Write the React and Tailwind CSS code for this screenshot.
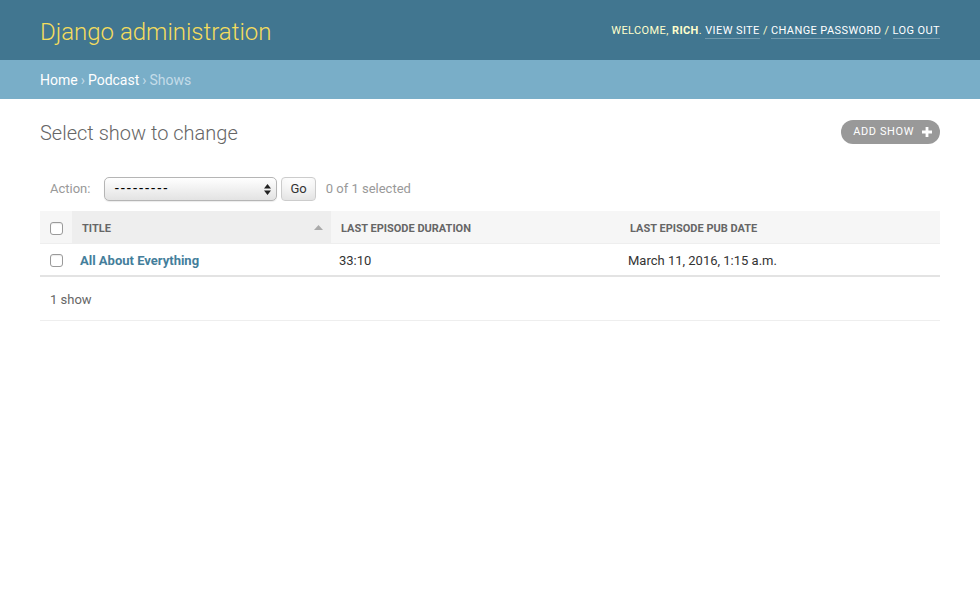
import React from 'react';

const Checkbox = () => (
  <span className="inline-block w-[13px] h-[13px] rounded-[3px] border border-[#9a9a9a] bg-white align-middle shadow-[inset_0_1px_1px_rgba(0,0,0,0.08)]"></span>
);

const App = () => {
  return (
    <div className="min-h-[600px] bg-white text-[#333] font-['Roboto','Liberation_Sans',sans-serif] text-[14px]">
      {/* Header */}
      <div className="h-[60px] bg-[#417690] px-10 flex items-center justify-between">
        <h1 className="mt-[3px] text-[24px] font-light text-[#f5dd5d] leading-none">Django administration</h1>
        <div className="text-[11px] uppercase tracking-[0.4px] text-[#ffc] leading-none">
          Welcome, <strong className="font-bold text-[#ffc]">Rich</strong>.{' '}
          <a className="text-white border-b border-white/25 pb-[1px]">View site</a> /{' '}
          <a className="text-white border-b border-white/25 pb-[1px]">Change password</a> /{' '}
          <a className="text-white border-b border-white/25 pb-[1px]">Log out</a>
        </div>
      </div>

      {/* Breadcrumbs */}
      <div className="h-[39px] bg-[#79aec8] px-10 pt-[2px] flex items-center text-[14px] text-[#c4dce8]">
        <a className="text-white">Home</a>
        <span className="mx-[3px]">›</span>
        <a className="text-white">Podcast</a>
        <span className="mx-[3px]">›</span>
        <span>Shows</span>
      </div>

      {/* Content */}
      <div className="px-10 pt-5">
        <div className="flex items-start justify-between h-[47px]">
          <h1 className="text-[20px] font-light text-[#666] leading-[28px]">Select show to change</h1>
          <a className="mt-[1px] h-[24px] flex items-center rounded-[15px] bg-[#999] pl-3 pr-[8px] text-[11px] uppercase tracking-[0.6px] text-white">
            Add show
            <svg width="10" height="10" viewBox="0 0 10 10" className="ml-[8px]">
              <path d="M3.6 0h2.8v3.6H10v2.8H6.4V10H3.6V6.4H0V3.6h3.6z" fill="#fff" />
            </svg>
          </a>
        </div>

        {/* Actions */}
        <div className="px-[10px] py-[10px] flex items-center h-[45px] text-[#999]">
          <label className="text-[13px] mr-[14px]">Action:</label>
          <div className="relative w-[173px] h-[24px] rounded-[5px] border border-[#b5b5b5] bg-gradient-to-b from-white to-[#e3e3e3] flex items-center pl-[9px] text-[14px] text-black shadow-[0_1px_1px_rgba(0,0,0,0.08)]">
            <span className="tracking-[1.4px] font-['Liberation_Sans',sans-serif]">---------</span>
            <svg width="7" height="11" viewBox="0 0 7 11" className="absolute right-[5px] top-[6px]">
              <path d="M3.5 0L7 4.4H0z M3.5 11L0 6.6h7z" fill="#222" />
            </svg>
          </div>
          <button className="ml-[4px] h-[24px] px-[8px] rounded-[4px] border border-[#ccc] bg-white text-[13px] text-[#333] shadow-[inset_0_-15px_20px_-10px_rgba(0,0,0,0.15)]">
            Go
          </button>
          <span className="ml-[10px] text-[13px] text-[#999]">0 of 1 selected</span>
        </div>

        {/* Results */}
        <table className="w-full table-fixed border-collapse">
          <colgroup>
            <col className="w-[32px]" />
            <col className="w-[259px]" />
            <col className="w-[289px]" />
            <col />
          </colgroup>
          <thead>
            <tr className="h-[32px] bg-[#f6f6f6] border-b border-[#eee]">
              <th className="pl-[10px] pt-[1px] text-left">
                <Checkbox />
              </th>
              <th className="bg-[#eee] px-[10px] pt-[4px] text-left">
                <div className="flex items-center justify-between text-[11px] font-bold uppercase text-[#666]">
                  <span>Title</span>
                  <svg width="9" height="5" viewBox="0 0 9 5" className="mr-[-2px] mt-[-2px]">
                    <path d="M4.5 0L9 5H0z" fill="#aaa" />
                  </svg>
                </div>
              </th>
              <th className="px-[10px] pt-[4px] text-left text-[11px] font-bold uppercase text-[#666]">Last episode duration</th>
              <th className="px-[10px] pt-[4px] text-left text-[11px] font-bold uppercase text-[#666]">Last episode pub date</th>
            </tr>
          </thead>
          <tbody>
            <tr className="h-[33px] border-b-2 border-[#e3e3e3]">
              <td className="pl-[10px] pt-[1px]">
                <Checkbox />
              </td>
              <th className="px-[8px] pt-[2px] text-left text-[13px] font-bold text-[#447e9b]">All About Everything</th>
              <td className="px-[8px] pt-[2px] text-[13px] text-[#333]">33:10</td>
              <td className="px-[8px] pt-[2px] text-[13px] text-[#333]">March 11, 2016, 1:15 a.m.</td>
            </tr>
          </tbody>
        </table>

        {/* Paginator */}
        <p className="h-[44px] px-[10px] pt-[3px] flex items-center text-[13px] text-[#666] border-b border-[#eee]">1 show</p>
      </div>
    </div>
  );
};

export default App;
